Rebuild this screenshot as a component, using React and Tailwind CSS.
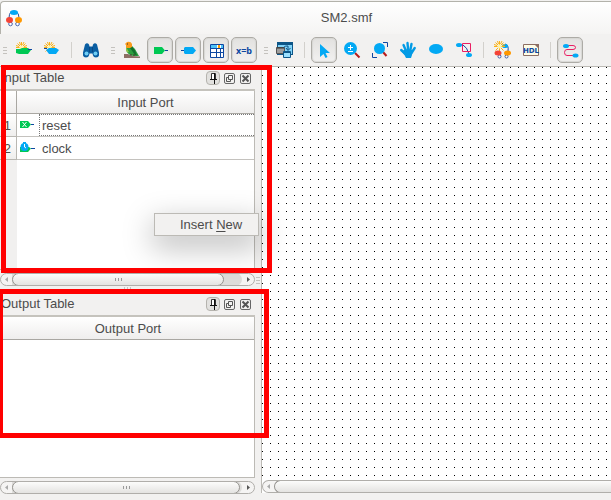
import React from "react";

const BLUE = "#03a9f4";
const NAVY = "#0d47a1";
const GREEN = "#00c853";

function Icon({ children, size = 20 }) {
  return (
    <svg width={size} height={size} viewBox={`0 0 ${size} ${size}`} fill="none" aria-hidden="true" className="shrink-0">
      {children}
    </svg>
  );
}

function Spark() {
  return (
    <g>
      <path d="M7.500 2v11M2 7.500h11M3.500 3.500l8 8M11.500 3.500l-8 8M5.500 2l1 3M10 2L8.500 5M2 5.500l3 1M13 5.500l-3 1" stroke="#fbb117" strokeWidth="1" />
      <circle cx="7.500" cy="7.500" r="2" fill="#fff3a8" />
    </g>
  );
}

function NewInputIcon() {
  return (
    <Icon>
      <Spark />
      <path d="M2 9h4l2-1h6l3 2-3 4H5l-3-1z" fill={GREEN} />
      <path d="M14 9.500h4" stroke={NAVY} />
    </Icon>
  );
}

function NewOutputIcon() {
  return (
    <Icon>
      <Spark />
      <path d="M2 8.500h3" stroke={NAVY} />
      <path d="M4 10l3-2h7l3 2-3 4H7z" fill={BLUE} />
    </Icon>
  );
}

function BinocularsIcon() {
  return (
    <Icon>
      <path d="M4 4.500Q6 2 8 4.500l.5 2h3l.5-2q2-2.500 4 0l2 8v3q-.5 2-3 2t-3-2l-.5-2h-3l-.5 2q-.5 2-3 2t-3-2v-3z" fill="#0a5ea2" />
      <circle cx="5.500" cy="13.500" r="2" fill="#6ecdf5" />
      <circle cx="14.500" cy="13.500" r="2" fill="#6ecdf5" />
      <path d="M8.500 7v5M11.500 7v5" stroke="#084a85" />
    </Icon>
  );
}

function BirdIcon() {
  return (
    <Icon>
      <path d="M2 14h4l4 2 8 .5V18H2z" fill="#8d6e63" />
      <path d="M4 7l6-1 3 3 4 7h-6q-7-1-7-9z" fill="#2e9e3e" />
      <path d="M8 8l5 7 2 .5-2-5-3-4z" fill="#12702b" />
      <path d="M3 4l2-2q4-1 5 2v3l-2 1H4V5z" fill="#fb9a1c" />
      <path d="M4 7l3 5-2 .5Q3.500 10 4 7z" fill="#8bc34a" />
      <path d="M9 16v-2M12 16v-2" stroke="#4e342e" />
      <path d="M5 4h1" stroke="#333" />
    </Icon>
  );
}

function InputIcon() {
  return (
    <Icon>
      <path d="M4 7h8l3 3.500-3 3.500H4z" fill={GREEN} />
      <path d="M15 10.500h3" stroke={NAVY} />
    </Icon>
  );
}

function OutputIcon() {
  return (
    <Icon>
      <path d="M3 10.500h4" stroke={NAVY} />
      <path d="M6 8l1-1h8l3 3.500-3 3.500H7l-1-1z" fill={BLUE} />
    </Icon>
  );
}

function TableIcon() {
  return (
    <Icon>
      <path d="M4 4h14v14H4z" fill="#fff" />
      <path d="M5 5h6v3H5zM15 5h2v3h-2z" fill="#4fc3f7" />
      <path d="M12 5h2v3h-2z" fill="#ff9800" />
      <path d="M4.500 4.500h13v13h-13zM4 8.500h14M4 12.500h14M10.500 8v10M14.500 8v10" stroke={NAVY} />
    </Icon>
  );
}

function WindowsIcon() {
  return (
    <Icon>
      <path d="M2 2h16v13H2z" fill="#0d5688" />
      <path d="M3 5h14v9H3z" fill="#81d4fa" />
      <path d="M1.500 7.500h8v6h-8z" fill="#9e9e9e" stroke="#555" />
      <path d="M2 8h7" stroke="#333" />
      <path d="M8.500 7.500q2-2 4.500-1.500v4M11 8l2 2.500L15.500 8" stroke="#0d4f80" />
      <path d="M8.500 11.500h7v6h-7z" fill="#9be0ff" stroke="#0d5688" />
      <path d="M8 12.500h8" stroke="#0d5688" />
    </Icon>
  );
}

function CursorIcon() {
  return (
    <Icon>
      <path d="M6 4l10 9h-4.500l2 4-2 1-2-4L6 17z" fill={BLUE} />
    </Icon>
  );
}

function ZoomIcon() {
  return (
    <Icon>
      <path d="M13 13l4.500 4.500" stroke="#b71c1c" strokeWidth="2" />
      <circle cx="8.500" cy="8.500" r="6.500" fill={BLUE} />
      <path d="M8.500 5v5M6 7.500h5M6 11.500h5" stroke="#fff" />
    </Icon>
  );
}

function FitIcon() {
  return (
    <Icon>
      <path d="M13 12l3.500 4" stroke="#b71c1c" strokeWidth="2" />
      <circle cx="9.500" cy="8.500" r="5.500" fill={BLUE} />
      <path d="M13 2.500h4.500V7M2.500 13v4.500H7" stroke={NAVY} />
    </Icon>
  );
}

function HandIcon() {
  return (
    <Icon>
      <path d="M3.200 10l4.300 4M5.500 5l3 7M9.500 3l.7 8M13.500 4l-1.500 8M16.700 8l-3.200 5" stroke="#039be5" strokeWidth="2.400" strokeLinecap="round" />
      <path d="M7 9.500l7.500.5-.5 5-1 3H8l-1.500-3-3-3.500z" fill="#039be5" />
    </Icon>
  );
}

function StateIcon() {
  return (
    <Icon>
      <ellipse cx="10" cy="9" rx="7" ry="5" fill={BLUE} />
    </Icon>
  );
}

function TransitionIcon() {
  return (
    <Icon>
      <path d="M5 5h4q4 2 6 9" stroke={NAVY} />
      <ellipse cx="5" cy="5" rx="3" ry="2" fill={BLUE} />
      <ellipse cx="15" cy="15" rx="3" ry="2" fill={BLUE} />
      <path d="M8.500 3.500h8v8h-8z" stroke="#e91e63" />
    </Icon>
  );
}

function MachineShape() {
  return (
    <g>
      <path d="M7 3.500Q5 6 5 10M12 3.500q3 2 3 6M6 13l2 3M14 13l-2 3" stroke="#27509b" />
      <circle cx="6.500" cy="16" r="1.800" fill="#fff" stroke="#4a67ad" />
      <circle cx="13.500" cy="16" r="1.800" fill="#fff" stroke="#4a67ad" />
      <ellipse cx="10" cy="4.500" rx="4" ry="2.500" fill={BLUE} />
      <ellipse cx="5.500" cy="12" rx="3.500" ry="3" fill="#f44336" />
      <ellipse cx="14.500" cy="12" rx="3.500" ry="3" fill="#ff9800" />
    </g>
  );
}

function NewMachineIcon() {
  return (
    <Icon>
      <path d="M12 4q4 1 3 7M6 14l2 2M14 14l-2 2" stroke={NAVY} />
      <circle cx="6.500" cy="16.500" r="1.500" fill="#fff" stroke="#3b5ba5" />
      <circle cx="13.500" cy="16.500" r="1.500" fill="#fff" stroke="#3b5ba5" />
      <ellipse cx="12" cy="6" rx="3" ry="2" fill={BLUE} />
      <g transform="translate(-1 -1)">
        <Spark />
      </g>
      <ellipse cx="5" cy="13" rx="3.500" ry="2.500" fill="#f44336" />
      <ellipse cx="14.500" cy="13" rx="3.500" ry="2.500" fill="#ff9800" />
    </Icon>
  );
}

function HdlIcon() {
  return (
    <Icon>
      <path d="M2.500 4.500h12l3 3v8h-15z" fill="#fffde7" stroke="#8d6e63" />
      <path d="M14 4h4v4h-1l-3-3z" fill="#8d6e63" />
      <text x="10" y="13" textAnchor="middle" fill={NAVY} className="font-['DejaVu_Sans',sans-serif] text-[7px] font-bold">
        HDL
      </text>
    </Icon>
  );
}

function RouteIcon() {
  return (
    <Icon>
      <path d="M8 5.500h5q2.500 0 2.500 2t-2.500 2H7q-2.500 0-2.500 3t2.500 3h7" stroke="#e91e63" />
      <ellipse cx="6" cy="6" rx="3" ry="2" fill={BLUE} />
      <ellipse cx="15.500" cy="15.500" rx="3" ry="2" fill={BLUE} />
    </Icon>
  );
}

function Tool({ label, pressed = false, children }) {
  const look = pressed
    ? "border-[#adaba6] bg-linear-to-b from-[#e2e1df] to-[#f2f1f0] shadow-[inset_0_0_1px_1px_#d8d7d4]"
    : "border-transparent";
  return (
    <button
      type="button"
      aria-label={label}
      aria-pressed={pressed}
      className={`flex size-[26px] shrink-0 items-center justify-center rounded-[5px] border ${look}`}
    >
      {children}
    </button>
  );
}

function Handle({ first = false }) {
  return (
    <div className={`flex shrink-0 flex-col gap-0.5 ${first ? "w-[9px] pl-[3px]" : "w-[11px] pl-[5px]"}`}>
      <i className="h-px w-1 bg-[#c4c2be]" />
      <i className="h-px w-1 bg-[#c4c2be]" />
      <i className="h-px w-1 bg-[#c4c2be]" />
    </div>
  );
}

function Separator() {
  return (
    <div className="flex w-[9px] shrink-0 justify-center">
      <i className="h-4 w-px bg-[#d2d0cc]" />
    </div>
  );
}

function Toolbar() {
  return (
    <div className="flex h-8 shrink-0 items-center gap-0.5 overflow-hidden bg-[#f2f1f0]">
      <Handle first />
      <Tool label="New input"><NewInputIcon /></Tool>
      <Tool label="New output"><NewOutputIcon /></Tool>
      <Separator />
      <Tool label="Find"><BinocularsIcon /></Tool>
      <Handle />
      <Tool label="Overview"><BirdIcon /></Tool>
      <Tool label="Input table" pressed><InputIcon /></Tool>
      <Tool label="Output table" pressed><OutputIcon /></Tool>
      <Tool label="State table" pressed><TableIcon /></Tool>
      <Tool label="Expressions" pressed>
        <span className="pt-0.5 font-['Open_Sans',sans-serif] text-[9px] font-bold text-[#0d47a1]">x=b</span>
      </Tool>
      <Handle />
      <Tool label="Windows"><WindowsIcon /></Tool>
      <Separator />
      <Tool label="Select" pressed><CursorIcon /></Tool>
      <Tool label="Zoom"><ZoomIcon /></Tool>
      <Tool label="Fit"><FitIcon /></Tool>
      <Tool label="Pan"><HandIcon /></Tool>
      <Tool label="State"><StateIcon /></Tool>
      <Tool label="Transition"><TransitionIcon /></Tool>
      <Separator />
      <Tool label="New machine"><NewMachineIcon /></Tool>
      <Tool label="Generate code"><HdlIcon /></Tool>
      <Separator />
      <Tool label="Curved routes" pressed><RouteIcon /></Tool>
    </div>
  );
}

function DockTitle({ children }) {
  return (
    <div className="flex h-6 shrink-0 items-center gap-1 border-b-2 border-[#c5c3bd] pr-1 pl-px">
      <h2 className="grow">{children}</h2>
      <button type="button" aria-label="Pin" className="flex size-3.5 items-center justify-center rounded border border-[#b5b3ae] bg-[#e2e1df]">
        <Icon size={12}>
          <path d="M4.500 1.500h4v6h-4z" fill="#fff" stroke="#333" />
          <path d="M7.500 1v6.500M3 7.500h7M7.500 8v4" stroke="#111" />
        </Icon>
      </button>
      <button type="button" aria-label="Float" className="flex items-center">
        <Icon size={11}>
          <rect x=".5" y=".5" width="10" height="10" rx="1.500" stroke="#666" />
          <path d="M4.500 2.500h4v4h-4zM4 4.500H2.500v4h4V7" stroke="#555" />
        </Icon>
      </button>
      <button type="button" aria-label="Close" className="ml-px flex items-center">
        <Icon size={11}>
          <rect x=".5" y=".5" width="10" height="10" rx="1.500" stroke="#666" />
          <path d="M2.500 2.500l6 6M8.500 2.500l-6 6" stroke="#555" strokeWidth="2" />
        </Icon>
      </button>
    </div>
  );
}

function Grip() {
  return (
    <span className="flex gap-0.5">
      <i className="h-[3px] w-px bg-[#999]" />
      <i className="h-[3px] w-px bg-[#999]" />
      <i className="h-[3px] w-px bg-[#999]" />
    </span>
  );
}

function Scrollbar({ grooveClass, open = false }) {
  return (
    <div
      className={`flex h-[13px] shrink-0 overflow-hidden border-y border-l border-[#b0aeaa] bg-[#f5f4f3] ${
        open ? "rounded-l-full" : "rounded-full border-r"
      }`}
    >
      <button type="button" aria-label="Scroll left" className="flex w-[11px] shrink-0 items-center justify-center">
        <svg width="3" height="5" viewBox="0 0 3 5"><path d="M3 0v5L0 2.500z" fill="#aaa" /></svg>
      </button>
      <div className={`-my-px flex grow bg-[#dddcda] ${grooveClass}`}>
        <div
          className={`flex grow items-center justify-center border-y border-l border-[#95938f] bg-linear-to-b from-[#fcfcfb] to-[#e4e3e1] ${
            open ? "rounded-l-full" : "rounded-full border-r"
          }`}
        >
          {!open && <Grip />}
        </div>
      </div>
      {!open && (
        <button type="button" aria-label="Scroll right" className="flex w-3 shrink-0 items-center justify-center">
          <svg width="3" height="5" viewBox="0 0 3 5"><path d="M0 0v5l3-2.500z" fill="#555" /></svg>
        </button>
      )}
    </div>
  );
}

function ResetPortIcon() {
  return (
    <svg width="14" height="12" viewBox="0 0 14 12" fill="none" aria-hidden="true">
      <path d="M0 2h8l3 3.500L8 9H0z" fill={GREEN} />
      <path d="M11 5.500h3" stroke={NAVY} />
      <path d="M2.500 3l4 5M6.500 3l-4 5" stroke="#fff" />
    </svg>
  );
}

function ClockPortIcon() {
  return (
    <svg width="15" height="12" viewBox="0 0 15 12" fill="none" aria-hidden="true">
      <path d="M0 5h9l2 1.500L8 10H0z" fill={GREEN} />
      <path d="M11 6.500h4" stroke={NAVY} />
      <circle cx="4.500" cy="5" r="4" fill={BLUE} />
      <path d="M3 0h3v2H3z" fill={BLUE} />
      <path d="M4.500 2v3l1.500 1" stroke="#fff" />
    </svg>
  );
}

const headCell = "h-[23px] border-b border-[#a9a7a2] bg-linear-to-b from-white to-[#efeeed] px-0 pt-0.5 pb-0 font-normal";

function InputRow({ number, name, icon, focused = false }) {
  return (
    <tr>
      <th scope="row" className="h-[23px] border-r border-b border-[#b9b7b2] bg-linear-to-b from-white to-[#efeeed] px-0 pt-0.5 pr-[5px] pb-0 text-right font-normal">
        {number}
      </th>
      <td className="h-[23px] border-b border-[#c4c2be] p-0">
        <div className="flex items-center pl-[3px]">
          <span className="w-[19px] shrink-0">{icon}</span>
          <span className={`flex h-[22px] grow items-center pt-0.5 pl-0.5 ${focused ? "border border-dotted border-[#777]" : "border border-transparent"}`}>
            {name}
          </span>
        </div>
      </td>
    </tr>
  );
}

function InputDock() {
  return (
    <section className="flex h-[219px] shrink-0 flex-col">
      <DockTitle>Input Table</DockTitle>
      <div className="mb-[3px] flex grow flex-col overflow-hidden border-r border-b border-[#bcbab5] bg-white">
        <table className="w-[274px] table-fixed border-separate border-spacing-0">
          <thead>
            <tr>
              <th className={`w-[17px] border-r ${headCell}`} aria-label="Row" />
              <th scope="col" className={headCell}>Input Port</th>
            </tr>
          </thead>
          <tbody>
            <InputRow number="1" name="reset" icon={<ResetPortIcon />} focused />
            <InputRow number="2" name="clock" icon={<ClockPortIcon />} />
          </tbody>
        </table>
        <div className="w-[17px] grow bg-[#f1f0ef]" />
      </div>
      <Scrollbar grooveClass="rounded-r-full pr-[18px]" />
    </section>
  );
}

function OutputDock() {
  return (
    <section className="flex grow flex-col">
      <DockTitle>Output Table</DockTitle>
      <div className="mb-[3px] grow overflow-hidden border-r border-b border-[#bcbab5] bg-white">
        <table className="w-[256px] border-separate border-spacing-0">
          <thead>
            <tr>
              <th scope="col" className={headCell}>Output Port</th>
            </tr>
          </thead>
        </table>
      </div>
      <Scrollbar grooveClass="rounded-r-full pr-0.5" />
    </section>
  );
}

function ContextMenu() {
  return (
    <div role="menu" className="absolute top-[213px] left-[154px] w-[105px] border border-[#bcbab5] bg-[#f2f1f0] shadow-[0_10px_30px_2px_rgba(0,0,0,0.26)]">
      <button type="button" role="menuitem" className="block h-[21px] w-full pl-[25px] text-left">
        Insert <span className="underline underline-offset-2">N</span>ew
      </button>
    </div>
  );
}

export default function App() {
  return (
    <div className="relative flex h-screen flex-col overflow-hidden bg-[#f2f1f0] font-['Liberation_Sans',Arial,sans-serif] text-[13px] leading-5 text-[#4c4c4c]">
      <header className="mt-px flex h-[33px] shrink-0 items-center rounded-tl border-t border-l border-[#b3b2ab] bg-linear-to-b from-white to-[#f5f4f3]">
        <div className="w-[81px] shrink-0 pl-[3px]">
          <Icon>
            <MachineShape />
          </Icon>
        </div>
        <h1 className="grow text-center">SM2.smf</h1>
      </header>
      <Toolbar />
      <main className="flex min-h-0 grow border-t border-[#bcbab5]">
        <div className="flex w-[255px] shrink-0 flex-col pb-1.5">
          <InputDock />
          <div className="flex h-[7px] shrink-0 justify-center pt-px opacity-50">
            <Grip />
          </div>
          <OutputDock />
        </div>
        <div className="flex w-1.5 shrink-0 flex-col items-center gap-0.5 pt-[210px]">
          <i className="h-px w-1 bg-[#c4c2be]" />
          <i className="h-px w-1 bg-[#c4c2be]" />
          <i className="h-px w-1 bg-[#c4c2be]" />
        </div>
        <div className="mb-[7px] flex grow flex-col border-l border-[#bcbab5] bg-white">
          <div className="mb-1 grow bg-[linear-gradient(to_right,transparent_1px,white_1px),linear-gradient(to_bottom,black_1px,white_1px)] bg-size-[8px_8px]" />
          <Scrollbar grooveClass="rounded-l-full" open />
        </div>
      </main>
      <ContextMenu />
      <div className="pointer-events-none absolute top-[65px] left-px h-[208px] w-[271px] border-5 border-[#ff0000]" />
      <div className="pointer-events-none absolute top-[289px] -left-0.5 h-[149px] w-[271px] border-5 border-[#ff0000]" />
    </div>
  );
}
